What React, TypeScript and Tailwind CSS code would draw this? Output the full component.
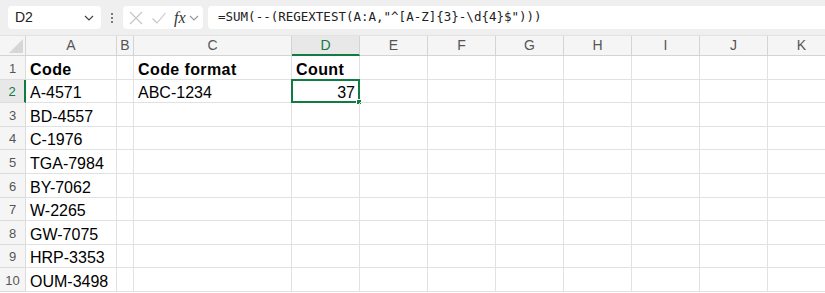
const cols = [
  { key: "A", w: 91 },
  { key: "B", w: 17 },
  { key: "C", w: 158 },
  { key: "D", w: 68 },
  { key: "E", w: 68 },
  { key: "F", w: 68 },
  { key: "G", w: 68 },
  { key: "H", w: 68 },
  { key: "I", w: 68 },
  { key: "J", w: 68 },
  { key: "K", w: 68 },
];

const codes = [
  "A-4571",
  "BD-4557",
  "C-1976",
  "TGA-7984",
  "BY-7062",
  "W-2265",
  "GW-7075",
  "HRP-3353",
  "OUM-3498",
];

type Cell = { text: string; bold?: boolean; right?: boolean };

function rowCells(r: number): Record<string, Cell> {
  if (r === 1)
    return {
      A: { text: "Code", bold: true },
      C: { text: "Code format", bold: true },
      D: { text: "Count", bold: true },
    };
  if (r === 2)
    return {
      A: { text: codes[0] },
      C: { text: "ABC-1234" },
      D: { text: "37", right: true },
    };
  return { A: { text: codes[r - 2] } };
}

function Chevron({ className }: { className?: string }) {
  return (
    <svg width="10" height="6" viewBox="0 0 10 6" className={className}>
      <path d="M1 1l4 4 4-4" fill="none" stroke="currentColor" strokeWidth="1.2" />
    </svg>
  );
}

function TopBar() {
  return (
    <div className="flex h-[36px] items-center bg-[#efefef] border-b border-[#e2e2e2]">
      <div className="ml-[8px] flex h-[23px] w-[93px] items-center justify-between rounded-[4px] bg-white pl-[7px] pr-[7px] text-[14px] text-[#222]">
        <span>D2</span>
        <Chevron className="text-[#444]" />
      </div>
      <div className="flex w-[22px] flex-col items-center gap-[2px]">
        <span className="h-[2px] w-[2px] rounded-full bg-[#555]" />
        <span className="h-[2px] w-[2px] rounded-full bg-[#555]" />
        <span className="h-[2px] w-[2px] rounded-full bg-[#555]" />
      </div>
      <div className="flex h-[23px] w-[80px] items-center rounded-[4px] bg-white pl-[4px]">
        <svg width="14" height="14" viewBox="0 0 14 14" className="ml-[2px] text-[#c4c4c4]">
          <path d="M1 1l12 12M13 1L1 13" stroke="currentColor" strokeWidth="1.1" />
        </svg>
        <svg width="16" height="14" viewBox="0 0 16 14" className="ml-[8px] text-[#c4c4c4]">
          <path d="M1.5 7.5l4.5 4.5 8.5-10" fill="none" stroke="currentColor" strokeWidth="1.1" />
        </svg>
        <span className="ml-[7px] font-['Liberation_Serif'] text-[16px] italic leading-none text-[#333]">
          fx
        </span>
        <Chevron className="ml-[3px] text-[#999]" />
      </div>
      <div className="ml-[5px] flex h-[23px] flex-1 items-center rounded-l-[4px] bg-white pl-[10px] font-['DejaVu_Sans_Mono'] text-[12.5px] text-[#222]">
        =SUM(--(REGEXTEST(A:A,"^[A-Z]{"{"}3{"}"}-\d{"{"}4{"}"}$")))
      </div>
    </div>
  );
}

function HeaderRow() {
  return (
    <div className="flex h-[20px] bg-[#f5f5f5]">
      <div className="relative w-[26px] shrink-0 border-r border-b border-[#d4d4d4]">
        <svg width="14" height="14" viewBox="0 0 14 14" className="absolute right-[2px] bottom-[2px]">
          <path d="M14 0V14H0Z" fill="#d6d6d6" />
        </svg>
      </div>
      {cols.map((c) => (
        <div
          key={c.key}
          style={{ width: c.w }}
          className={
            c.key === "D"
              ? "flex shrink-0 items-center justify-center border-r border-b-2 border-r-[#d4d4d4] border-b-[#107c41] bg-[#e8e8e8] text-[14px] text-[#107c41]"
              : "flex shrink-0 items-center justify-center border-r border-b border-[#d4d4d4] text-[14px] text-[#555]"
          }
        >
          {c.key}
        </div>
      ))}
    </div>
  );
}

function DataRow({ r }: { r: number }) {
  const cells = rowCells(r);
  const active = r === 2;
  return (
    <div className="flex h-[23.6px]">
      <div
        className={
          active
            ? "flex w-[26px] shrink-0 items-center justify-center border-r-2 border-b border-r-[#107c41] border-b-[#dcdcdc] bg-[#e8e8e8] pt-[2px] text-[13px] text-[#107c41]"
            : "flex w-[26px] shrink-0 items-center justify-center border-r border-b border-[#dcdcdc] bg-[#f5f5f5] pt-[2px] text-[13px] text-[#555]"
        }
      >
        {r}
      </div>
      {cols.map((c) => {
        const cell = cells[c.key];
        return (
          <div
            key={c.key}
            style={{ width: c.w }}
            className={
              "relative flex shrink-0 items-end border-r border-b border-[#e1e1e1] px-[4px] text-[16px] leading-[18px] text-black whitespace-nowrap" +
              (cell?.right ? " justify-end" : "") +
              (cell?.bold ? " font-bold tracking-[0.4px]" : "")
            }
          >
            {cell?.text}
            {active && c.key === "D" && (
              <div className="absolute -left-[1px] -top-[1px] h-[calc(100%+2px)] w-[calc(100%+2px)] border-2 border-[#107c41]">
                <span className="absolute -right-[4px] -bottom-[4px] h-[6px] w-[6px] border border-white bg-[#107c41]" />
              </div>
            )}
          </div>
        );
      })}
    </div>
  );
}

export default function App() {
  return (
    <div className="h-[293px] w-[825px] overflow-hidden bg-white font-['Liberation_Sans',sans-serif]">
      <TopBar />
      <HeaderRow />
      {Array.from({ length: 10 }, (_, i) => (
        <DataRow key={i} r={i + 1} />
      ))}
    </div>
  );
}
